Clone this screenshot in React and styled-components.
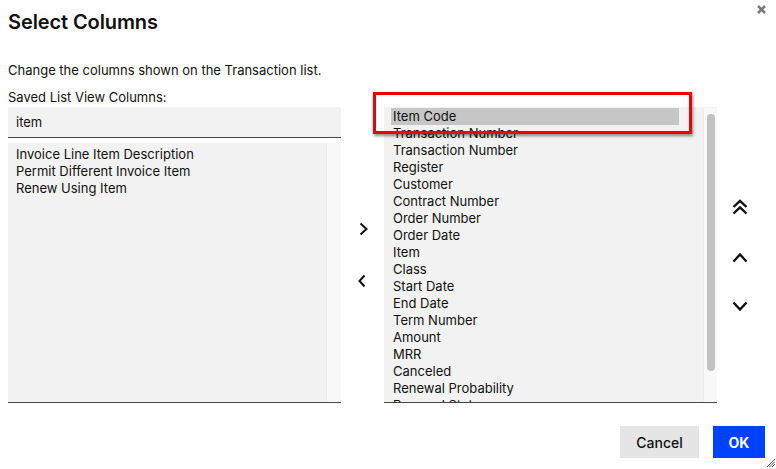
import React from "react";
import styled, { createGlobalStyle } from "styled-components";

const GlobalStyle = createGlobalStyle`
  html, body {
    margin: 0;
    padding: 0;
    background: #ffffff;
  }
  body {
    font-family: Inter, "Noto Sans", "Liberation Sans", sans-serif;
    color: #111;
  }
`;

// Dialog shell
const Dialog = styled.div`
  width: 776px;
  height: 469px;
  box-sizing: border-box;
  padding: 5px 1px 0 8px;
  background: #ffffff;
  display: flex;
  flex-direction: column;
`;

const Header = styled.div`
  display: flex;
  justify-content: space-between;
  align-items: flex-start;
  padding-right: 9px;
`;

const Title = styled.h1`
  margin: 5px 0 0;
  font-size: 20px;
  line-height: 24px;
  font-weight: 600;
  letter-spacing: -0.1px;
`;

const CloseButton = styled.button`
  width: 9px;
  height: 9px;
  padding: 0;
  border: none;
  background: transparent;
  display: flex;
  cursor: pointer;
`;

const Description = styled.p`
  margin: 28px 0 0;
  font-size: 13px;
  line-height: 17px;
`;

// Two lists with move controls between and beside them
const Body = styled.div`
  margin-top: 9px;
  display: grid;
  grid-template-columns: 333px 43px 333px 46px;
  grid-template-rows: 18px 296px;
  row-gap: 1px;
`;

const FieldLabel = styled.label`
  grid-column: 1 / 2;
  font-size: 13px;
  line-height: 18px;
`;

const LeftStack = styled.div`
  grid-column: 1 / 2;
  grid-row: 2;
  display: flex;
  flex-direction: column;
  gap: 5px;
`;

const SearchInput = styled.input`
  height: 31px;
  box-sizing: border-box;
  border: none;
  border-bottom: 1px solid #474747;
  background: #f2f2f2;
  padding: 0 8px;
  font-family: inherit;
  font-size: 13px;
  color: #111;
  outline: none;
`;

const ListBox = styled.div`
  position: relative;
  flex: 1;
  min-height: 0;
  box-sizing: border-box;
  background: #f2f2f2;
  border-bottom: 1px solid #474747;
  display: flex;
  overflow: hidden;
`;

const Options = styled.ul`
  flex: 1;
  list-style: none;
  margin: 0;
  padding: ${(p) => p.$pad};
  overflow: hidden;
`;

const Option = styled.li`
  width: ${(p) => (p.$wide ? "288px" : "auto")};
  box-sizing: border-box;
  padding: 0 2px;
  font-size: 13px;
  line-height: 17px;
  white-space: nowrap;
  background: ${(p) => (p.$selected ? "#c6c6c6" : "transparent")};
`;

const ScrollTrack = styled.div`
  width: ${(p) => p.$width}px;
  flex-shrink: 0;
  background: #f8f8f8;
  border-left: 1px solid #ececec;
  display: flex;
  justify-content: center;
  padding-top: 6px;
  box-sizing: border-box;
`;

const ScrollThumb = styled.div`
  width: 8px;
  height: 257px;
  border-radius: 4px;
  background: #c1c1c1;
`;

const MoveColumn = styled.div`
  grid-row: 2;
  display: flex;
  flex-direction: column;
  align-items: center;
  justify-content: center;
  gap: ${(p) => p.$gap}px;
`;

const IconButton = styled.button`
  border: none;
  background: transparent;
  padding: 0;
  display: flex;
  cursor: pointer;
  margin-left: ${(p) => p.$shift || 0}px;
`;

const RightCell = styled.div`
  grid-column: 3 / 4;
  grid-row: 2;
  position: relative;
  display: flex;
`;

const RightList = styled(ListBox)`
  padding-top: 1px;
`;

// Red annotation frame around the first entry
const Callout = styled.div`
  position: absolute;
  left: -11px;
  top: -15px;
  width: 319px;
  height: 42px;
  box-sizing: border-box;
  border: 3px solid #ee0000;
  box-shadow: 1px 2px 3px rgba(0, 0, 0, 0.45);
  pointer-events: none;
`;

const Footer = styled.div`
  margin-top: 23px;
  display: flex;
  justify-content: flex-end;
  align-items: flex-start;
`;

const Button = styled.button`
  height: 32px;
  border: none;
  padding: 0;
  width: ${(p) => p.$width}px;
  margin-left: ${(p) => p.$gap}px;
  font-family: inherit;
  font-size: 14px;
  font-weight: ${(p) => (p.$primary ? 700 : 500)};
  color: ${(p) => (p.$primary ? "#ffffff" : "#111")};
  background: ${(p) => (p.$primary ? "#0040ff" : "#e5e5e5")};
  cursor: pointer;
`;

const Grip = styled.div`
  margin: 33px 0 0 2px;
  display: flex;
`;

const savedColumns = [
  "Invoice Line Item Description",
  "Permit Different Invoice Item",
  "Renew Using Item",
];

const shownColumns = [
  "Item Code",
  "Transaction Number",
  "Transaction Number",
  "Register",
  "Customer",
  "Contract Number",
  "Order Number",
  "Order Date",
  "Item",
  "Class",
  "Start Date",
  "End Date",
  "Term Number",
  "Amount",
  "MRR",
  "Canceled",
  "Renewal Probability",
  "Renewal Status",
];

const Chevron = ({ dir, w = 9, h = 14, stroke = 2 }) => {
  const pts = {
    right: `1.5,1.5 ${w - 1.5},${h / 2} 1.5,${h - 1.5}`,
    left: `${w - 1.5},1.5 1.5,${h / 2} ${w - 1.5},${h - 1.5}`,
    up: `1.5,${h - 1.5} ${w / 2},1.5 ${w - 1.5},${h - 1.5}`,
    down: `1.5,1.5 ${w / 2},${h - 1.5} ${w - 1.5},1.5`,
  }[dir];
  return (
    <svg width={w} height={h} viewBox={`0 0 ${w} ${h}`}>
      <polyline points={pts} fill="none" stroke="#111" strokeWidth={stroke} />
    </svg>
  );
};

const DoubleUp = () => (
  <svg width="16" height="16" viewBox="0 0 16 16">
    <polyline points="1.5,8 8,1.8 14.5,8" fill="none" stroke="#111" strokeWidth="2.4" />
    <polyline points="1.5,14.5 8,8.3 14.5,14.5" fill="none" stroke="#111" strokeWidth="2.4" />
  </svg>
);

const CloseIcon = () => (
  <svg width="9" height="9" viewBox="0 0 9 9">
    <path d="M1 1 L8 8 M8 1 L1 8" stroke="#7a7a7a" strokeWidth="2.6" />
  </svg>
);

const GripIcon = () => (
  <svg width="8" height="8" viewBox="0 0 8 8">
    <path d="M8 0 L0 8 M8 2.5 L2.5 8 M8 5 L5 8" stroke="#555" strokeWidth="1" />
  </svg>
);

export default function App() {
  return (
    <>
      <GlobalStyle />
      <Dialog>
        <Header>
          <Title>Select Columns</Title>
          <CloseButton aria-label="Close">
            <CloseIcon />
          </CloseButton>
        </Header>
        <Description>Change the columns shown on the Transaction list.</Description>
        <Body>
          <FieldLabel>Saved List View Columns:</FieldLabel>
          <LeftStack>
            <SearchInput defaultValue="item" />
            <ListBox>
              <Options $pad="3px 6px">
                {savedColumns.map((c) => (
                  <Option key={c}>{c}</Option>
                ))}
              </Options>
              <ScrollTrack $width={15} />
            </ListBox>
          </LeftStack>
          <MoveColumn $gap={38}>
            <IconButton $shift={1}>
              <Chevron dir="right" />
            </IconButton>
            <IconButton $shift={-2}>
              <Chevron dir="left" w={8} />
            </IconButton>
          </MoveColumn>
          <RightCell>
            <RightList>
              <Options $pad="0 0 0 7px">
                {shownColumns.map((c, i) => (
                  <Option key={i} $wide $selected={i === 0}>
                    {c}
                  </Option>
                ))}
              </Options>
              <ScrollTrack $width={14}>
                <ScrollThumb />
              </ScrollTrack>
            </RightList>
            <Callout />
          </RightCell>
          <MoveColumn $gap={38}>
            <IconButton>
              <DoubleUp />
            </IconButton>
            <IconButton>
              <Chevron dir="up" w={16} h={10} stroke={2.4} />
            </IconButton>
            <IconButton>
              <Chevron dir="down" w={16} h={10} stroke={2.4} />
            </IconButton>
          </MoveColumn>
        </Body>
        <Footer>
          <Button $width={79} $gap={0}>
            Cancel
          </Button>
          <Button $primary $width={52} $gap={14}>
            OK
          </Button>
          <Grip>
            <GripIcon />
          </Grip>
        </Footer>
      </Dialog>
    </>
  );
}
